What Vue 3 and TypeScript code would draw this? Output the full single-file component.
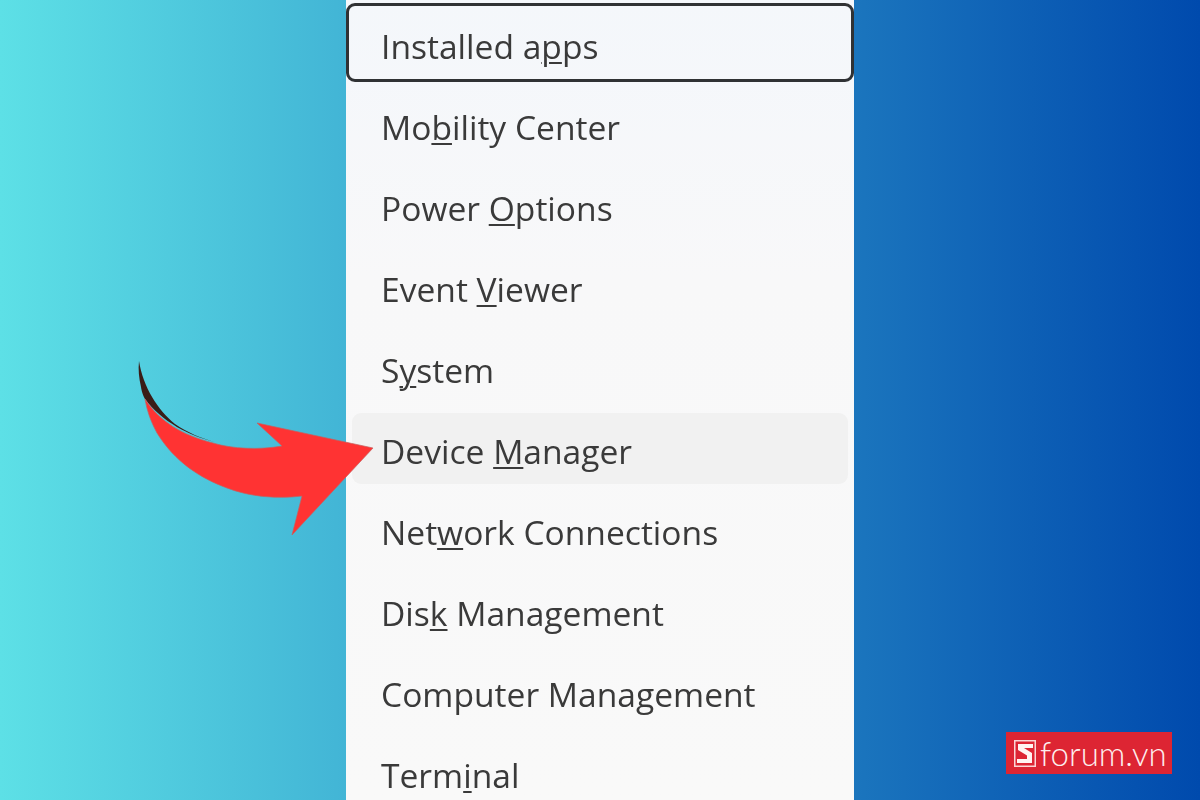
<script setup lang="ts">
interface Item { before: string; key: string; after: string; state?: string }
const items: Item[] = [
  { before: 'Installed a', key: 'p', after: 'ps', state: 'focused' },
  { before: 'Mo', key: 'b', after: 'ility Center' },
  { before: 'Power ', key: 'O', after: 'ptions' },
  { before: 'Event ', key: 'V', after: 'iewer' },
  { before: 'S', key: 'y', after: 'stem' },
  { before: 'Device ', key: 'M', after: 'anager', state: 'hovered' },
  { before: 'Net', key: 'w', after: 'ork Connections' },
  { before: 'Dis', key: 'k', after: ' Management' },
  { before: 'Computer Mana', key: 'g', after: 'ement' },
  { before: 'Term', key: 'i', after: 'nal' },
]
</script>

<template>
  <main class="page">
    <nav class="menu">
      <div v-for="item in items" :key="item.before" class="row" :class="item.state">
        <span class="label">{{ item.before }}<span class="access">{{ item.key }}</span>{{ item.after }}</span>
      </div>
    </nav>

    <svg class="arrow" viewBox="0 0 260 200" width="260" height="200" aria-hidden="true">
      <path d="M19 11 C23 37 38 60 55 74 C68 83 81 88 95 92 C70 86 42 72 25 49 C22 44 21 37 21 37 C19 28 18 20 19 11 Z" fill="#3a1c17" />
      <path d="M25 49 C40 72 62 85 93 93 C112 99 140 100 162 96 L137 73 L253 98 L172 185 L182 146 C158 149 130 147 107 138 C80 128 55 112 37 83 C31 72 27 61 25 49 Z" fill="#ff3333" stroke="#c4605f" stroke-width=".7" />
    </svg>

    <div class="brand">
      <svg class="brand-mark" viewBox="0 0 22 27" width="22" height="27" aria-hidden="true">
        <rect x=".75" y=".75" width="20.5" height="25.5" fill="none" stroke="#fbd5d5" stroke-width="1.5" />
        <path d="M4 4 H19 V8 H10 L18 13 V23 H3 V19 H13 V15.5 L4 10 Z" fill="#fff4f2" />
      </svg>
      <span class="brand-name">forum.vn</span>
    </div>
  </main>
</template>

<style>
html, body { margin: 0; }
</style>

<style scoped>
.page {
  position: relative;
  height: 800px;
  overflow: hidden;
  display: flex;
  justify-content: center;
  background: linear-gradient(90deg, #5de0e6, #004aad);
}
.menu {
  box-sizing: border-box;
  width: 508px;
  height: 800px;
  padding-top: 5px;
  overflow: hidden;
  background: linear-gradient(180deg, #f4f7fb, #f8f8f9 35%, #f9f9f9);
  font-family: "Open Sans", sans-serif;
  font-size: 33.6px;
  color: #3a3a3a;
}
.row {
  position: relative;
  height: 81px;
  display: flex;
  align-items: center;
  padding-left: 35px;
  box-sizing: border-box;
}
.label {
  position: relative;
  z-index: 1;
  white-space: pre;
  filter: blur(0.5px);
}
.access {
  text-decoration: underline;
  text-decoration-thickness: 2px;
  text-underline-offset: 3px;
}
.focused::before {
  content: "";
  position: absolute;
  left: 0;
  right: 0;
  top: -2px;
  bottom: 4px;
  border: 3px solid #303234;
  border-radius: 9px;
  filter: blur(0.7px);
}
.hovered::before {
  content: "";
  position: absolute;
  left: 6px;
  right: 6px;
  top: 3px;
  bottom: 7px;
  border-radius: 9px;
  background: #f1f1f1;
}
.arrow {
  position: absolute;
  left: 120px;
  top: 350px;
}
.brand {
  position: absolute;
  left: 1006px;
  top: 732px;
  width: 166px;
  height: 42px;
  box-sizing: border-box;
  padding-left: 8px;
  display: flex;
  align-items: center;
  gap: 4px;
  background: #dd2533;
}
.brand-mark { flex: none; }
.brand-name {
  font-family: Lato, sans-serif;
  font-weight: 300;
  font-size: 33px;
  line-height: 42px;
  color: #fdeeee;
  white-space: nowrap;
}
</style>
